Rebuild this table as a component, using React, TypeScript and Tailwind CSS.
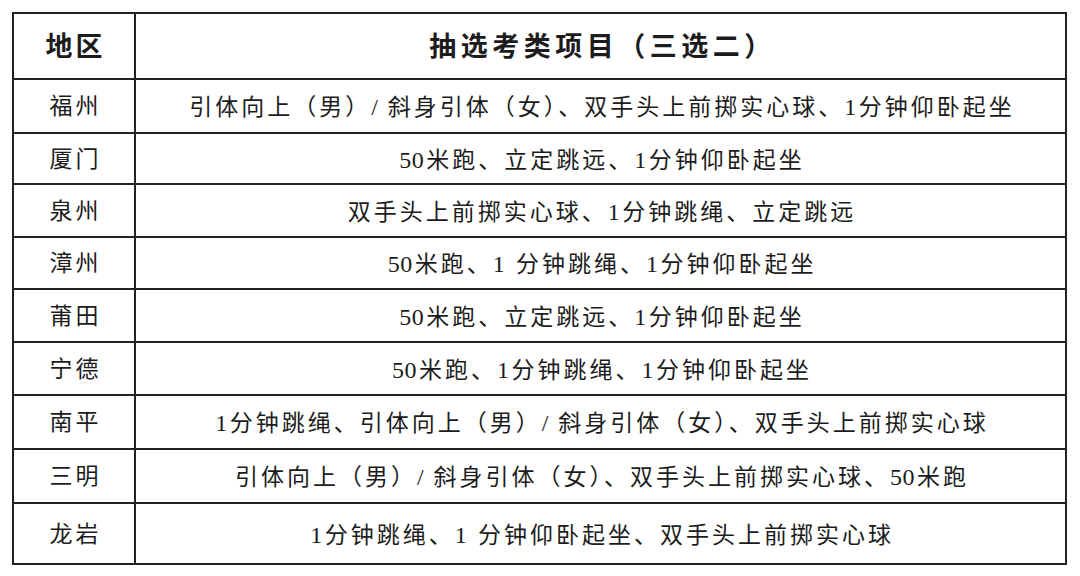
import React from "react";

const rows: [string, string, number][] = [
  ["福州", "引体向上（男）/ 斜身引体（女）、双手头上前掷实心球、1分钟仰卧起坐", 54],
  ["厦门", "50米跑、立定跳远、1分钟仰卧起坐", 51],
  ["泉州", "双手头上前掷实心球、1分钟跳绳、立定跳远", 53],
  ["漳州", "50米跑、1 分钟跳绳、1分钟仰卧起坐", 52],
  ["莆田", "50米跑、立定跳远、1分钟仰卧起坐", 53],
  ["宁德", "50米跑、1分钟跳绳、1分钟仰卧起坐", 53],
  ["南平", "1分钟跳绳、引体向上（男）/ 斜身引体（女）、双手头上前掷实心球", 54],
  ["三明", "引体向上（男）/ 斜身引体（女）、双手头上前掷实心球、50米跑", 54],
  ["龙岩", "1分钟跳绳、1 分钟仰卧起坐、双手头上前掷实心球", 61],
];

function Rich({ text }: { text: string }) {
  const parts = text.split(/([0-9]+|\/)/);
  return (
    <>
      {parts.map((p, i) =>
        /^[0-9]+$/.test(p) ? (
          <span key={i} className="tracking-[0.5px] text-[24px] mr-[2px]">
            {p}
          </span>
        ) : p === "/" ? (
          <span key={i} className="text-[24px] tracking-[1px]">
            {p}
          </span>
        ) : (
          <span key={i}>{p}</span>
        )
      )}
    </>
  );
}

export default function App() {
  return (
    <div
      className="w-[1080px] h-[576px] bg-white pt-[12px] pl-[12px] text-[#1c1c1c]"
      style={{ fontFamily: '"Liberation Serif", "Noto Sans CJK SC", serif' }}
    >
      <table className="border-collapse w-[1055px] table-fixed">
        <colgroup>
          <col className="w-[122px]" />
          <col />
        </colgroup>
        <thead>
          <tr className="h-[66px]">
            <th className="border-2 border-[#222] text-[27px] font-bold tracking-[3px] pl-[3px] pt-[2px] text-center align-middle">
              地区
            </th>
            <th className="border-2 border-[#222] text-[27px] font-bold tracking-[4.5px] pl-[4px] pt-[2px] text-center align-middle">
              抽选考类项目（三选二）
            </th>
          </tr>
        </thead>
        <tbody>
          {rows.map(([city, items, h]) => (
            <tr key={city} style={{ height: h }}>
              <td className="border-2 border-[#222] text-[23px] tracking-[3px] pl-[3px] pt-[3px] text-center align-middle">
                {city}
              </td>
              <td className="border-2 border-[#222] text-[23px] tracking-[3px] pl-[3px] pt-[3px] text-center align-middle whitespace-pre">
                <Rich text={items} />
              </td>
            </tr>
          ))}
        </tbody>
      </table>
    </div>
  );
}
